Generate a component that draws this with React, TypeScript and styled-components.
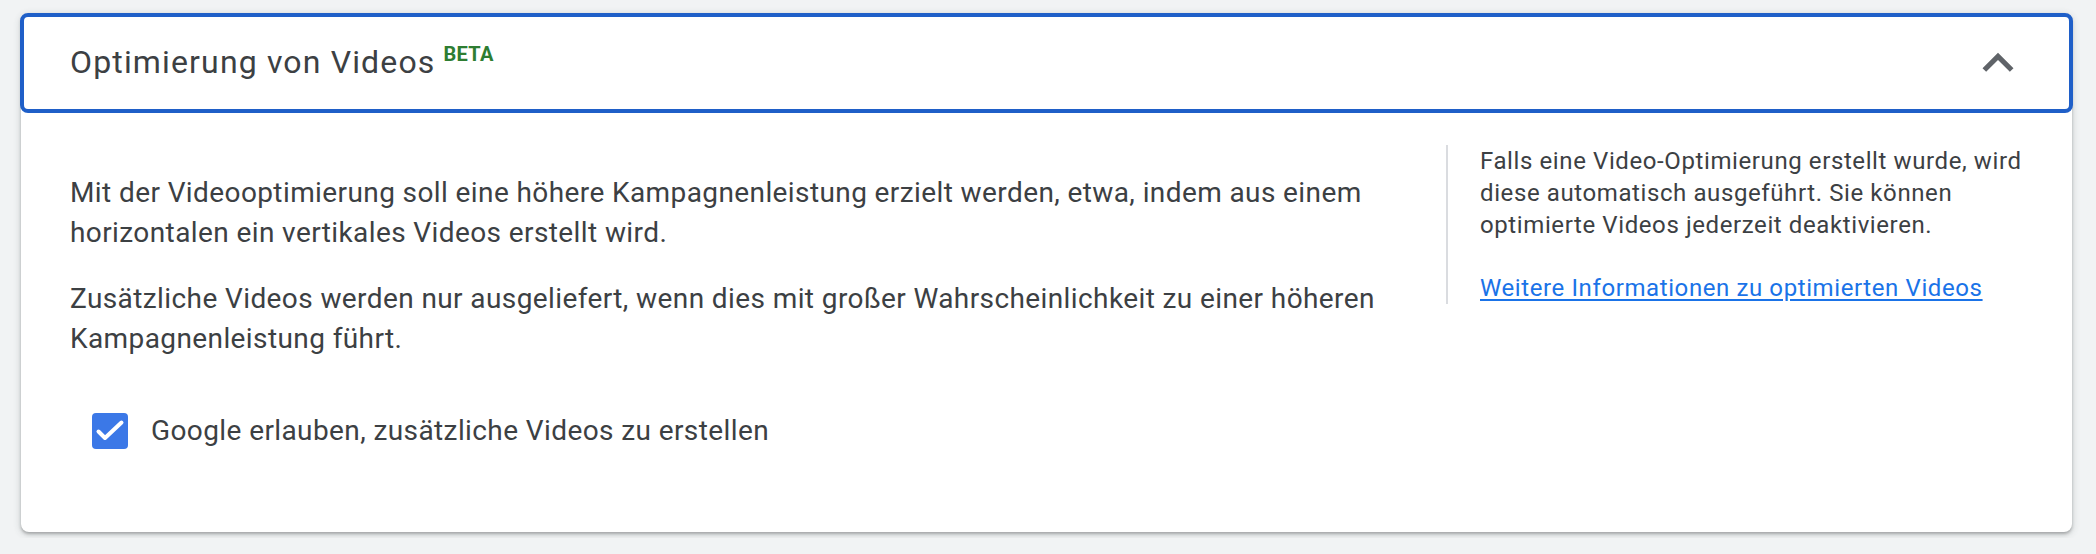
import React from "react";
import styled, {createGlobalStyle} from "styled-components";

const GlobalStyle = createGlobalStyle`
    body {
        margin: 0;
        background: #f1f3f4;
        font-family: Roboto, "Liberation Sans", sans-serif;
        color: #3c4043;
    }
`;

const Page = styled.div`
    padding: 13px 24px 6px 21px;
`;

const Card = styled.section`
    background: #fff;
    border-radius: 8px;
    box-shadow: 0 2px 3px rgba(60, 64, 67, 0.35), 0 2px 6px 2px rgba(60, 64, 67, 0.12);
`;

const Header = styled.div`
    display: flex;
    align-items: center;
    justify-content: space-between;
    height: 100px;
    box-sizing: border-box;
    margin: 0 -1px;
    padding: 0 40px 0 46px;
    border: 4px solid #1f5fc8;
    border-radius: 8px;
`;

const Title = styled.h2`
    margin: 0 0 4px;
    font-family: Roboto, sans-serif;
    font-size: 32px;
    font-weight: 400;
    color: #3c4043;
    letter-spacing: 1.15px;
`;

const Badge = styled.sup`
    margin-left: 8px;
    font-size: 20px;
    font-weight: 700;
    color: #2e7d32;
    vertical-align: 12px;
    letter-spacing: 0.3px;
`;

const Chevron = styled.svg`
    width: 62px;
    height: 62px;
    fill: #5f6368;
`;

const Body = styled.div`
    display: flex;
    padding: 32px 32px 81px 49px;
`;

const Main = styled.div`
    flex: 1;
    padding-top: 28px;
    margin-right: 40px;
    letter-spacing: 0.4px;
`;

const Paragraph = styled.p`
    margin: 0 0 26px;
    font-size: 28px;
    line-height: 40px;
`;

const CheckRow = styled.label`
    display: flex;
    align-items: center;
    gap: 23px;
    margin: 52px 0 0 22px;
    font-size: 28px;
    line-height: 40px;
`;

const Box = styled.span`
    display: flex;
    align-items: center;
    justify-content: center;
    width: 36px;
    height: 36px;
    border-radius: 4px;
    background: #3b78e7;
`;

const Aside = styled.aside`
    width: 560px;
    align-self: flex-start;
    padding-left: 32px;
    border-left: 2px solid #dadce0;
    font-size: 24px;
    line-height: 32px;
    letter-spacing: 0.6px;
`;

const Note = styled.p`
    margin: 0 0 31px;
`;

const Link = styled.a`
    color: #1a73e8;
    text-decoration: underline;
    text-underline-offset: 3px;
`;

export default function App() {
    return (
        <Page>
            <GlobalStyle />
            <Card>
                <Header>
                    <Title>
                        Optimierung von Videos<Badge>BETA</Badge>
                    </Title>
                    <Chevron viewBox="0 0 24 24">
                        <path d="M12 8l-6 6 1.41 1.41L12 10.83l4.59 4.58L18 14z" />
                    </Chevron>
                </Header>
                <Body>
                    <Main>
                        <Paragraph>
                            Mit der Videooptimierung soll eine höhere Kampagnenleistung erzielt werden, etwa, indem aus einem horizontalen ein vertikales Videos erstellt wird.
                        </Paragraph>
                        <Paragraph>
                            Zusätzliche Videos werden nur ausgeliefert, wenn dies mit großer Wahrscheinlichkeit zu einer höheren Kampagnenleistung führt.
                        </Paragraph>
                        <CheckRow>
                            <Box>
                                <svg width="36" height="36" viewBox="0 0 36 36">
                                    <path d="M6.5 18.5l6.5 6.5L29.5 9.5" fill="none" stroke="#fff" strokeWidth="4" strokeLinecap="round" strokeLinejoin="round" />
                                </svg>
                            </Box>
                            Google erlauben, zusätzliche Videos zu erstellen
                        </CheckRow>
                    </Main>
                    <Aside>
                        <Note>
                            Falls eine Video-Optimierung erstellt wurde, wird diese automatisch ausgeführt. Sie können optimierte Videos jederzeit deaktivieren.
                        </Note>
                        <Link href="#">Weitere Informationen zu optimierten Videos</Link>
                    </Aside>
                </Body>
            </Card>
        </Page>
    );
}
